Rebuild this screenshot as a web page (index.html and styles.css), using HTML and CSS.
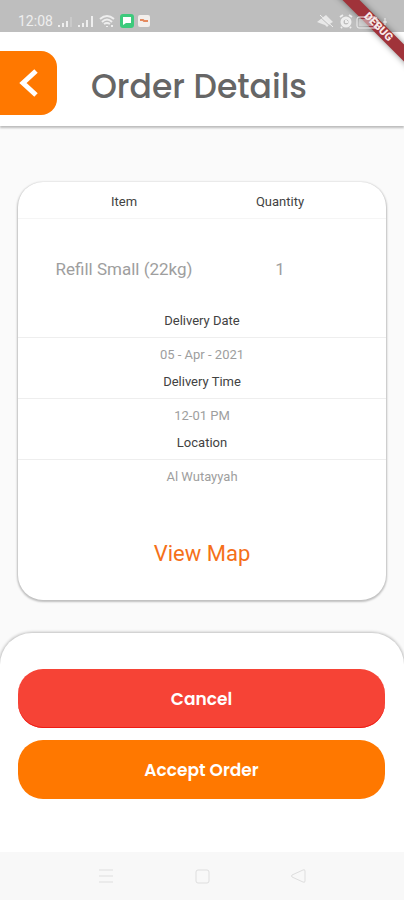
FILE: index.html
```html
<!DOCTYPE html>
<html lang="en">
<head>
<meta charset="utf-8">
<meta name="viewport" content="width=device-width, initial-scale=1">
<title>Order Details</title>
<link rel="stylesheet" href="styles.css">
</head>
<body>
<div class="status">
  <span class="status-time">12:08</span>
  <svg class="signal" viewBox="0 0 17 14" aria-hidden="true"><path d="M1 13v-2h2v2zM5 13v-4h2v4zM9 13V7h2v6z"/><path class="faint" d="M13 13V3h2v10z"/></svg>
  <svg class="signal" viewBox="0 0 17 14" aria-hidden="true"><path d="M0 13v-2h2v2zM4 13v-4h2v4zM8 13V6h2v7zM13 13V2h2v11z"/></svg>
  <svg class="wifi" viewBox="0 0 18 14" aria-hidden="true"><path d="M1 5Q8 -1 15 5M3 8Q8 3 13 8M5 10Q8 8 11 10"/><path d="M8 12v1M13 11v2"/></svg>
  <svg class="app" viewBox="0 0 14 14" aria-hidden="true"><rect width="14" height="14" rx="3" fill="#3dca7c"/><path d="M3 3h8v6H6l-3 2z" fill="#fff"/></svg>
  <svg class="app" viewBox="0 0 14 14" aria-hidden="true"><rect x="1" y="1" width="12" height="12" rx="2" fill="#f3efec"/><path d="M3 6h3l1 1h4" fill="none" stroke="#e58a5f" stroke-width="2"/></svg>
  <svg class="right-icons" viewBox="0 0 76 18" aria-hidden="true">
    <path d="M1 10l9-7 7 7-2 1-4 4-2-2-3-1z" fill="#e8e8e8"/><path d="M3 4l13 12" stroke="#bebebe" stroke-width="1"/><path d="M4 3l13 12" stroke="#eee" stroke-width="1"/>
    <circle cx="30" cy="10" r="4" fill="none" stroke="#eee" stroke-width="3"/><path d="M24 5l3-2M33 3l3 2M26 15l-1 1M34 15l1 1M30 8v2h2" stroke="#eee" stroke-width="2" fill="none"/>
    <rect x="41" y="5" width="20" height="11" rx="2" fill="none" stroke="#eee" stroke-width="1"/><rect x="43" y="7" width="13" height="7" fill="#e3e3e3" opacity=".5"/><path d="M62 8v4M69 6v7M67 10h4" stroke="#eee" stroke-width="1" fill="none"/>
  </svg>
</div>
<div class="debug"><span>DEBUG</span></div>
<header class="header">
  <button class="back" type="button" aria-label="Back"><svg viewBox="0 0 20 30" aria-hidden="true"><path d="M17 3L4 15L17 27"/></svg></button>
  <h1>Order Details</h1>
</header>
<main class="main">
  <section class="card">
    <table class="items">
      <thead><tr><th scope="col">Item</th><th scope="col">Quantity</th></tr></thead>
      <tbody><tr><td>Refill Small (22kg)</td><td>1</td></tr></tbody>
    </table>
    <dl class="details">
      <dt>Delivery Date</dt><dd>05 - Apr - 2021</dd>
      <dt>Delivery Time</dt><dd>12-01 PM</dd>
      <dt>Location</dt><dd>Al Wutayyah</dd>
    </dl>
    <a class="map" href="#map">View Map</a>
  </section>
</main>
<section class="actions">
  <button class="action cancel" type="button">Cancel</button>
  <button class="action accept" type="button">Accept Order</button>
</section>
<nav class="nav">
  <button type="button" aria-label="Recent apps"><svg viewBox="0 0 16 16" aria-hidden="true"><path d="M1 2h14M1 8h14M1 14h14"/></svg></button>
  <button type="button" aria-label="Home"><svg viewBox="0 0 16 16" aria-hidden="true"><rect x="2" y="2" width="13" height="13" rx="2"/></svg></button>
  <button type="button" aria-label="Go back"><svg viewBox="0 0 16 16" aria-hidden="true"><path d="M13 2Q15 1 15 3V13Q15 15 13 14L2 9Q1 8 2 7Z"/></svg></button>
</nav>
</body>
</html>
```
FILE: styles.css
```css
* { box-sizing: border-box; }
body {
  margin: 0;
  min-height: 100vh;
  display: flex;
  flex-direction: column;
  position: relative;
  overflow-x: hidden;
  background: #fafafa;
  color: #424242;
  font-family: Roboto, sans-serif;
  font-size: 13px;
}
button { border: 0; padding: 0; background: none; font: inherit; cursor: pointer; }
svg { display: block; }

.status {
  display: flex;
  align-items: center;
  height: 32px;
  padding: 10px 12px 0 18px;
  background: #bebebe;
  color: #eee;
}
.status-time { font-size: 14px; line-height: 20px; margin-right: 4px; }
.signal { width: 17px; height: 14px; margin-right: 4px; fill: #eee; }
.faint { fill: #cacaca; }
.wifi { width: 18px; height: 14px; margin-right: 3px; fill: none; stroke: #eee; stroke-width: 2; }
.app { width: 14px; height: 14px; margin-right: 3px; }
.right-icons { position: relative; z-index: 2; width: 76px; height: 18px; margin-left: auto; }

.debug {
  position: absolute;
  z-index: 1;
  top: 0;
  right: 0;
  width: 80px;
  height: 80px;
  overflow: hidden;
  pointer-events: none;
}
.debug span {
  position: absolute;
  top: 19px;
  right: -32px;
  width: 120px;
  padding-left: 6px;
  transform: rotate(45deg);
  background: #a0333a;
  box-shadow: 0 0 6px rgba(0, 0, 0, .45);
  color: #fbe9e9;
  font-size: 11px;
  font-weight: 900;
  line-height: 12px;
  text-align: center;
}

.header {
  display: flex;
  align-items: center;
  gap: 34px;
  height: 94px;
  padding-top: 8px;
  background: #fff;
  box-shadow: 0 2px 2px rgba(0, 0, 0, .25);
}
.back {
  display: flex;
  align-items: center;
  justify-content: center;
  width: 57px;
  height: 64px;
  border-radius: 0 16px 16px 0;
  background: #ff7800;
}
.back svg { width: 20px; height: 30px; fill: none; stroke: #fff; stroke-width: 5; }
h1 {
  margin: 0;
  padding-top: 7px;
  color: #666;
  font-family: Poppins, Inter, sans-serif;
  font-size: 33px;
  font-weight: 500;
  line-height: 40px;
}

.main { flex: 1; padding: 56px 18px 33px; }
.card {
  padding-bottom: 32px;
  border-radius: 25px;
  background: #fff;
  box-shadow: 0 1px 2px 1px rgba(0, 0, 0, .24);
  text-align: center;
}
.items { width: 100%; border-collapse: collapse; table-layout: fixed; }
th { padding: 11px 0 7px; border-bottom: 1px solid #f5f5f5; font-weight: 400; line-height: 18px; }
td { padding: 40px 0 32px; color: #9e9e9e; font-size: 17px; line-height: 20px; }
th:first-child, td:first-child { padding-left: 28px; }
th:last-child, td:last-child { padding-right: 28px; }
.details { margin: 0; line-height: 18px; }
dt { padding-top: 1px; padding-bottom: 7px; border-bottom: 1px solid #eee; }
dd { margin: 0; padding: 8px 0; color: #9e9e9e; }
.map {
  display: inline-block;
  margin-top: 46px;
  color: #f5701a;
  font-size: 22px;
  line-height: 28px;
  text-decoration: none;
  vertical-align: top;
}

.actions {
  display: flex;
  flex-direction: column;
  gap: 12px;
  padding: 36px 19px 53px 18px;
  border-radius: 32px 32px 0 0;
  background: #fff;
  box-shadow: 0 0 3px 1px rgba(0, 0, 0, .24);
}
.action {
  height: 59px;
  border-radius: 25px;
  color: #fff;
  font-family: Poppins, Inter, sans-serif;
  font-size: 17px;
  font-weight: 600;
}
.cancel { background: #f64336; box-shadow: inset 0 -1px #ee1c14; }
.accept { background: #ff7800; }

.nav {
  position: relative;
  display: flex;
  justify-content: center;
  gap: 80px;
  height: 48px;
  background: #f8f8f8;
}
.nav svg { width: 16px; height: 16px; fill: none; stroke: #dedede; stroke-width: 1; }
```
